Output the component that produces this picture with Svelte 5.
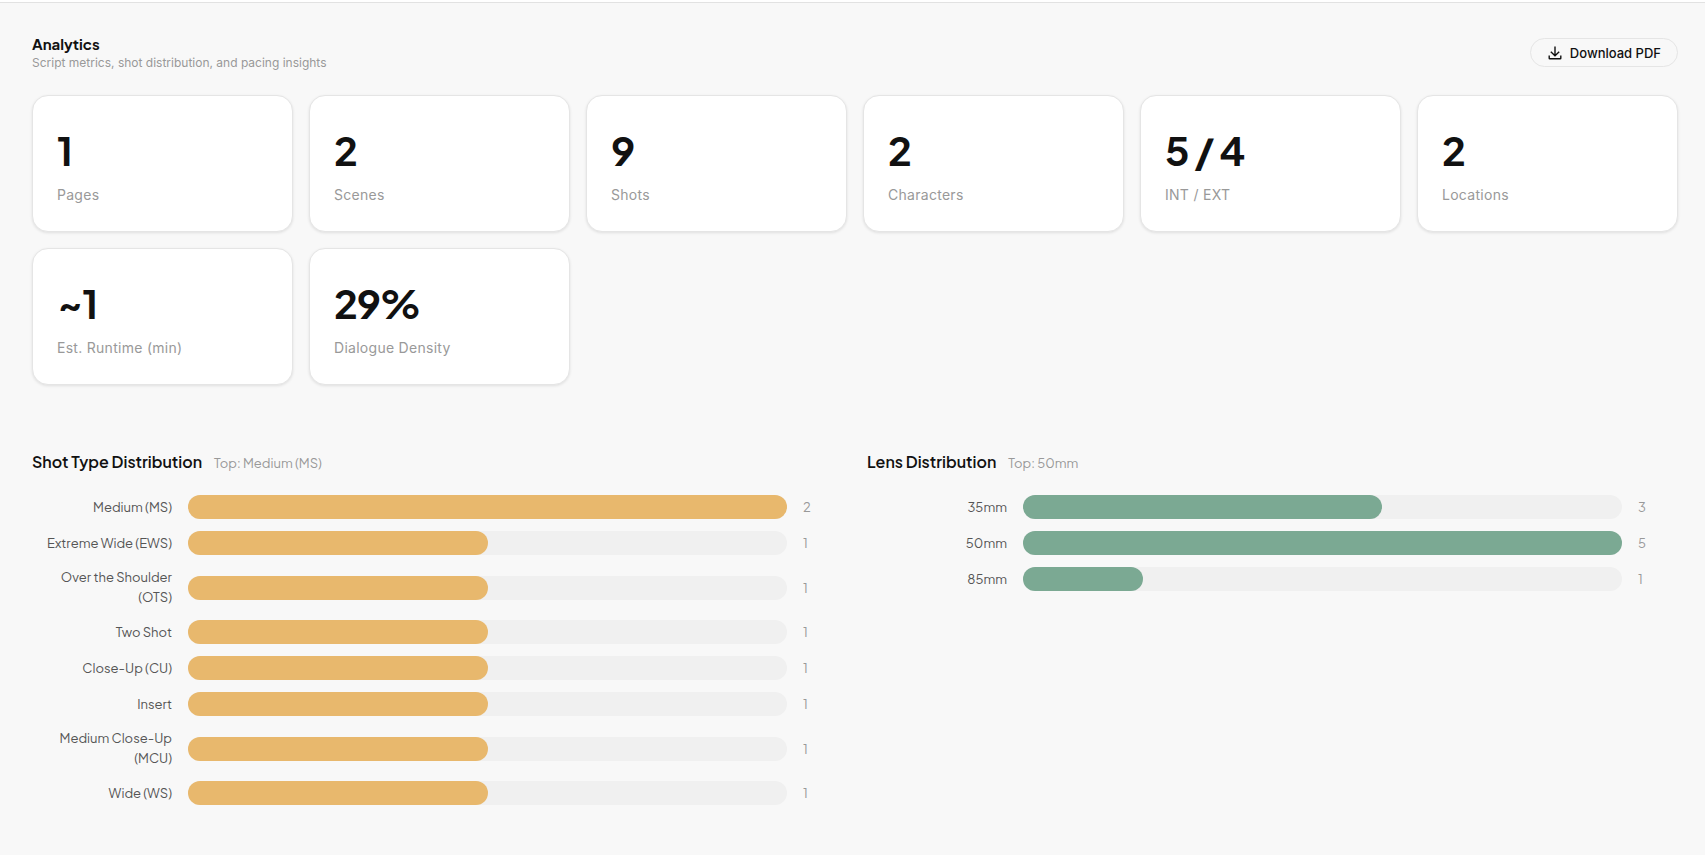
<script>
  const stats = [
    { value: '1', label: 'Pages' },
    { value: '2', label: 'Scenes' },
    { value: '9', label: 'Shots' },
    { value: '2', label: 'Characters' },
    { value: '5 / 4', label: 'INT / EXT' },
    { value: '2', label: 'Locations' },
    { value: '~1', label: 'Est. Runtime (min)' },
    { value: '29%', label: 'Dialogue Density' }
  ];

  const charts = [
    {
      title: 'Shot Type Distribution',
      top: 'Medium (MS)',
      tone: 'amber',
      rows: [
        ['Medium (MS)', 2],
        ['Extreme Wide (EWS)', 1],
        ['Over the Shoulder (OTS)', 1],
        ['Two Shot', 1],
        ['Close-Up (CU)', 1],
        ['Insert', 1],
        ['Medium Close-Up (MCU)', 1],
        ['Wide (WS)', 1]
      ]
    },
    {
      title: 'Lens Distribution',
      top: '50mm',
      tone: 'green',
      rows: [
        ['35mm', 3],
        ['50mm', 5],
        ['85mm', 1]
      ]
    }
  ];

  const share = (rows, n) => (n / Math.max(...rows.map((r) => r[1]))) * 100;
</script>

<main>
  <header>
    <div>
      <h1>Analytics</h1>
      <p>Script metrics, shot distribution, and pacing insights</p>
    </div>
    <button type="button">
      <svg viewBox="0 0 16 16" width="16" height="16" fill="none" stroke="currentColor" stroke-width="1.4" aria-hidden="true">
        <path d="M8 1.5V10.5M3.8 6.8L8 10.8L12.2 6.8M2.2 10.5V13.2Q2.2 13.8 2.8 13.8H13.2Q13.8 13.8 13.8 13.2V10.5" />
      </svg>
      Download PDF
    </button>
  </header>

  <section class="stats">
    {#each stats as s}
      <article>
        <strong>{s.value}</strong>
        <span>{s.label}</span>
      </article>
    {/each}
  </section>

  <section class="charts">
    {#each charts as c}
      <div class="chart">
        <h2>{c.title}<small>Top: {c.top}</small></h2>
        <ul>
          {#each c.rows as [name, count]}
            <li>
              <span class="name">{name}</span>
              <div class="track">
                <div class="fill {c.tone}" style="width: {share(c.rows, count)}%"></div>
              </div>
              <span class="count">{count}</span>
            </li>
          {/each}
        </ul>
      </div>
    {/each}
  </section>
</main>

<style>
  :global(body) {
    margin: 0;
    background: #f8f8f8;
  }

  main {
    border-top: 1px solid #e2e2e2;
    margin-top: 2px;
    box-shadow: 0 -2px #fff;
    padding: 31px 27px 32px 32px;
    font-family: 'Plus Jakarta Sans', Inter, sans-serif;
    color: #111;
  }

  header {
    display: flex;
    justify-content: space-between;
    align-items: center;
    margin-bottom: 24px;
  }

  h1 {
    margin: 0;
    font-size: 15px;
    line-height: 20px;
    font-weight: 700;
  }

  p {
    margin: 0;
    padding-top: 1px;
    font: 12px/16px Inter, sans-serif;
    color: #999;
  }

  button {
    display: flex;
    align-items: center;
    gap: 7px;
    height: 29px;
    padding: 0 16px;
    border: 1px solid #e5e5e5;
    border-radius: 15px;
    background: transparent;
    font: 500 13px/16px Inter, sans-serif;
    color: #111;
  }

  .stats {
    display: grid;
    grid-template-columns: repeat(6, 1fr);
    gap: 16px;
  }

  article {
    display: flex;
    flex-direction: column;
    gap: 12px;
    padding: 32px 24px 24px;
    border: 1px solid #e5e5e5;
    border-radius: 16px;
    background: #fff;
    box-shadow: 0 1px 3px rgba(0, 0, 0, 0.1);
  }

  strong {
    font-size: 40px;
    line-height: 44px;
    font-weight: 700;
    letter-spacing: -0.03em;
  }

  article span {
    padding-bottom: 2px;
    font: 14px/21px Inter, sans-serif;
    letter-spacing: 0.02em;
    color: #999;
  }

  .charts {
    display: grid;
    grid-template-columns: 1fr 1fr;
    gap: 24px;
    margin-top: 64px;
  }

  h2 {
    margin: 0 0 19px;
    font-size: 16px;
    line-height: 25px;
    font-weight: 600;
  }

  small {
    margin-left: 12px;
    font-size: 13px;
    font-weight: 400;
    color: #999;
  }

  ul {
    display: flex;
    flex-direction: column;
    gap: 12px;
    margin: 0;
    padding: 0;
    list-style: none;
  }

  li {
    display: grid;
    grid-template-columns: 140px 1fr 40px;
    align-items: center;
    column-gap: 16px;
    font-size: 13px;
    line-height: 20px;
  }

  .name {
    padding-bottom: 1px;
    text-align: right;
    color: #555;
  }

  .track {
    height: 24px;
    border-radius: 12px;
    background: #f0f0f0;
  }

  .fill {
    height: 100%;
    border-radius: 12px;
  }

  .amber {
    background: #e8b86d;
  }

  .green {
    background: #7ba993;
  }

  .count {
    color: #999;
  }
</style>
